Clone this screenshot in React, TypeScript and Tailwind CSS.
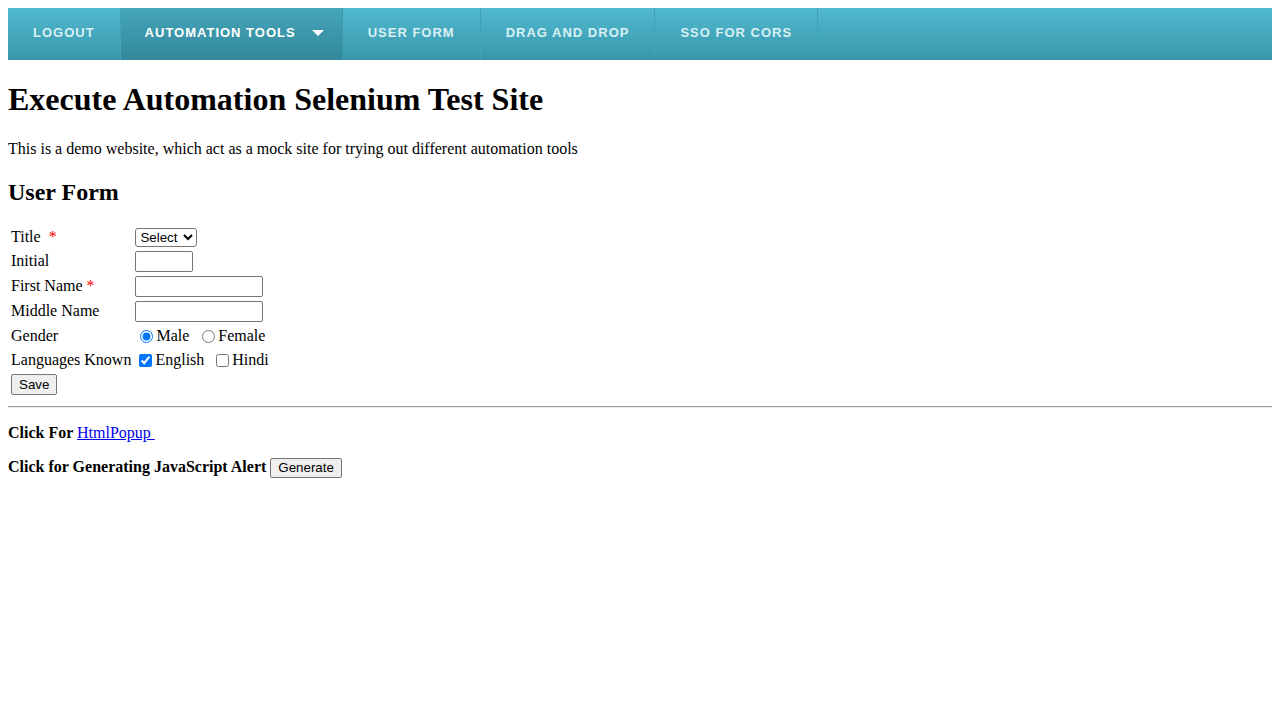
import React from "react";

const navItems = [
  { label: "LOGOUT", active: false, arrow: false },
  { label: "AUTOMATION TOOLS", active: true, arrow: true },
  { label: "USER FORM", active: false, arrow: false },
  { label: "DRAG AND DROP", active: false, arrow: false },
  { label: "SSO FOR CORS", active: false, arrow: false },
];

function Req() {
  return <span className="text-[#ff0000]">*</span>;
}

export default function App() {
  return (
    <div className="min-h-[720px] bg-white p-[8px] font-['Liberation_Serif',serif] text-[16px] leading-[18px] text-black">
      {/* Top nav */}
      <nav className="flex h-[52px] bg-gradient-to-b from-[#51bad1] to-[#3896a9]">
        {navItems.map((item) => (
          <a
            key={item.label}
            href="#"
            className={
              item.active
                ? "flex items-center border-r border-[#3a9aad] bg-gradient-to-b from-[#45a5ba] to-[#33889a] pb-[2px] pl-[24px] pr-[18px] font-['Liberation_Sans',sans-serif] text-[13px] font-bold tracking-[1px] text-white"
                : "flex items-center border-r border-[#3fa3b7] px-[25px] pb-[2px] font-['Liberation_Sans',sans-serif] text-[13px] font-bold tracking-[1px] text-[#d9f0f4]"
            }
          >
            {item.label}
            {item.arrow && (
              <svg width="12" height="7" viewBox="0 0 12 7" className="ml-[16px]">
                <path d="M0 0 L12 0 L6 6 Z" fill="#ffffff" />
              </svg>
            )}
          </a>
        ))}
      </nav>

      <h1 className="my-[21.44px] text-[32px] font-bold leading-[37px]">
        Execute Automation Selenium Test Site
      </h1>
      <p className="my-[16px]">
        This is a demo website, which act as a mock site for trying out different automation tools
      </p>
      <h2 className="mt-[19.92px] mb-[19px] text-[24px] font-bold leading-[28px]">User Form</h2>

      <table className="border-separate border-spacing-[2px]">
        <tbody>
          <tr>
            <td className="p-[1px]">
              Title&nbsp; <Req />
            </td>
            <td className="p-[1px]">
              <select className="h-[19px] w-[62px] rounded-[3px] border border-[#767676] bg-white font-['Liberation_Sans',sans-serif] text-[13.33px] leading-none text-black">
                <option>Select</option>
                <option>Mr.</option>
                <option>Ms.</option>
              </select>
            </td>
          </tr>
          <tr>
            <td className="p-[1px]">Initial</td>
            <td className="p-[1px]">
              <input
                type="text"
                className="block h-[21px] w-[58px] rounded-[2px] border border-[#767676] px-[2px] font-['Liberation_Sans',sans-serif] text-[13.33px]"
              />
            </td>
          </tr>
          <tr>
            <td className="p-[1px]">
              First Name <Req />
            </td>
            <td className="p-[1px]">
              <input
                type="text"
                className="block h-[21px] w-[128px] rounded-[2px] border border-[#767676] px-[2px] font-['Liberation_Sans',sans-serif] text-[13.33px]"
              />
            </td>
          </tr>
          <tr>
            <td className="p-[1px]">Middle Name</td>
            <td className="p-[1px]">
              <input
                type="text"
                className="block h-[21px] w-[128px] rounded-[2px] border border-[#767676] px-[2px] font-['Liberation_Sans',sans-serif] text-[13.33px]"
              />
            </td>
          </tr>
          <tr>
            <td className="p-[1px]">Gender</td>
            <td className="p-[1px]">
              <span className="flex h-[20px] items-center pt-[1px]">
                <input type="radio" name="g" defaultChecked className="ml-[5px] mr-[3px] h-[13px] w-[13px]" />
                Male&nbsp;&nbsp;
                <input type="radio" name="g" className="ml-[5px] mr-[3px] h-[13px] w-[13px]" />
                Female
              </span>
            </td>
          </tr>
          <tr>
            <td className="p-[1px]">Languages Known</td>
            <td className="p-[1px]">
              <span className="flex h-[20px] items-center pt-[1px]">
                <input type="checkbox" defaultChecked className="ml-[4px] mr-[3px] h-[13px] w-[13px]" />
                English&nbsp;&nbsp;
                <input type="checkbox" className="ml-[4px] mr-[3px] h-[13px] w-[13px]" />
                Hindi
              </span>
            </td>
          </tr>
          <tr>
            <td className="p-[1px]">
              <button className="block h-[21px] rounded-[2px] border border-[#767676] bg-[#efefef] px-[7px] font-['Liberation_Sans',sans-serif] text-[13.33px] leading-none">
                Save
              </button>
            </td>
            <td className="p-[1px]"></td>
          </tr>
        </tbody>
      </table>

      <hr className="my-[8px] border-t border-b border-t-[#9a9a9a] border-b-[#eeeeee]" />

      <p className="my-[16px] font-bold">
        Click For{" "}
        <a href="#" className="font-normal text-[#0000ee] underline">
          HtmlPopup&nbsp;
        </a>
      </p>
      <p className="my-[16px] font-bold">
        Click for Generating JavaScript Alert{" "}
        <button className="h-[20px] rounded-[2px] border border-[#767676] bg-[#efefef] px-[7px] font-['Liberation_Sans',sans-serif] text-[13.33px] font-normal leading-none">
          Generate
        </button>
      </p>
    </div>
  );
}
